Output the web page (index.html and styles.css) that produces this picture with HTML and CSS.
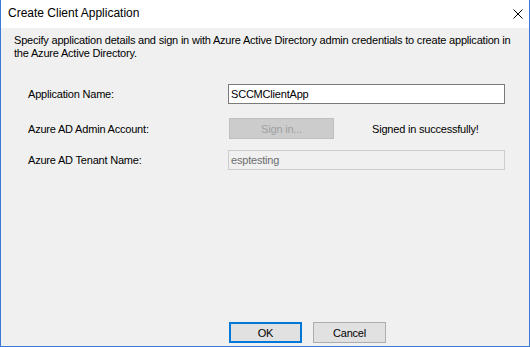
FILE: index.html
```html
<!DOCTYPE html>
<html lang="en">
<head>
    <meta charset="UTF-8">
    <title>Create Client Application</title>
    <link rel="stylesheet" href="styles.css">
</head>
<body>
    <div class="window">
        <div class="titlebar">
            <span class="title">Create Client Application</span>
            <svg class="close" width="10" height="10" viewBox="0 0 10 10">
                <path d="M0.5 0.5 L9.5 9.5 M9.5 0.5 L0.5 9.5" stroke="#000" stroke-width="1"/>
            </svg>
        </div>

        <div class="content">
            <p class="desc">Specify application details and sign in with Azure Active Directory admin credentials to create application in the Azure Active Directory.</p>

            <div class="form">
                <div class="row row-name">
                    <label>Application Name:</label>
                    <input class="textbox" type="text" value="SCCMClientApp">
                </div>
                <div class="row row-account">
                    <label>Azure AD Admin Account:</label>
                    <button class="btn-signin" disabled>Sign in...</button>
                    <span class="status">Signed in successfully!</span>
                </div>
                <div class="row row-tenant">
                    <label>Azure AD Tenant Name:</label>
                    <input class="textbox readonly" type="text" value="esptesting" readonly>
                </div>
            </div>

            <div class="actions">
                <button class="btn btn-default">OK</button>
                <button class="btn">Cancel</button>
            </div>
        </div>
    </div>
</body>
</html>
```

FILE: styles.css
```css
* {
    margin: 0;
    padding: 0;
    box-sizing: border-box;
}

body {
    font-family: 'Liberation Sans', Arial, sans-serif;
    font-size: 11px;
    letter-spacing: -0.2px;
    color: #000;
    background-color: #fff;
}

/* Window frame */
.window {
    width: 530px;
    height: 347px;
    display: flex;
    flex-direction: column;
    border: 1px solid #3b78d8;
    border-top: none;
    background-color: #f0f0f0;
}

.titlebar {
    height: 28px;
    background-color: #fff;
    display: flex;
    align-items: center;
    justify-content: space-between;
    padding: 0 6px 2px 7px;
}

.title {
    font-size: 12px;
    letter-spacing: 0;
}

.close {
    margin-top: 2px;
}

/* Dialog content */
.content {
    flex: 1;
    display: flex;
    flex-direction: column;
    padding: 6px 0 3px 13px;
}

.desc {
    line-height: 13px;
    width: 508px;
}

.form {
    margin-top: 24px;
    padding-left: 14px;
    display: flex;
    flex-direction: column;
}

.row {
    display: flex;
    align-items: center;
}

.row label {
    width: 200px;
}

.row-account {
    margin-top: 14px;
}

.row-tenant {
    margin-top: 11px;
}

.textbox {
    width: 277px;
    height: 20px;
    border: 1px solid #7a7a7a;
    background-color: #fff;
    font-family: inherit;
    font-size: 11px;
    letter-spacing: -0.2px;
    padding: 0 2px;
    color: #000;
    outline: none;
}

.textbox.readonly {
    border-color: #ccc;
    background-color: #f0f0f0;
    color: #6d6d6d;
}

.btn-signin {
    width: 105px;
    height: 21px;
    margin-left: 1px;
    border: 1px solid #bfbfbf;
    background-color: #ccc;
    color: #a0a0a0;
    font-family: inherit;
    font-size: 11px;
    letter-spacing: -0.2px;
}

.status {
    margin-left: 38px;
}

/* Buttons */
.actions {
    margin-top: auto;
    display: flex;
    gap: 11px;
    padding-left: 215px;
}

.btn {
    width: 73px;
    height: 21px;
    border: 1px solid #adadad;
    background-color: #e1e1e1;
    font-family: inherit;
    font-size: 11px;
    letter-spacing: -0.2px;
    color: #000;
}

.btn-default {
    border: 2px solid #0078d7;
}
```
